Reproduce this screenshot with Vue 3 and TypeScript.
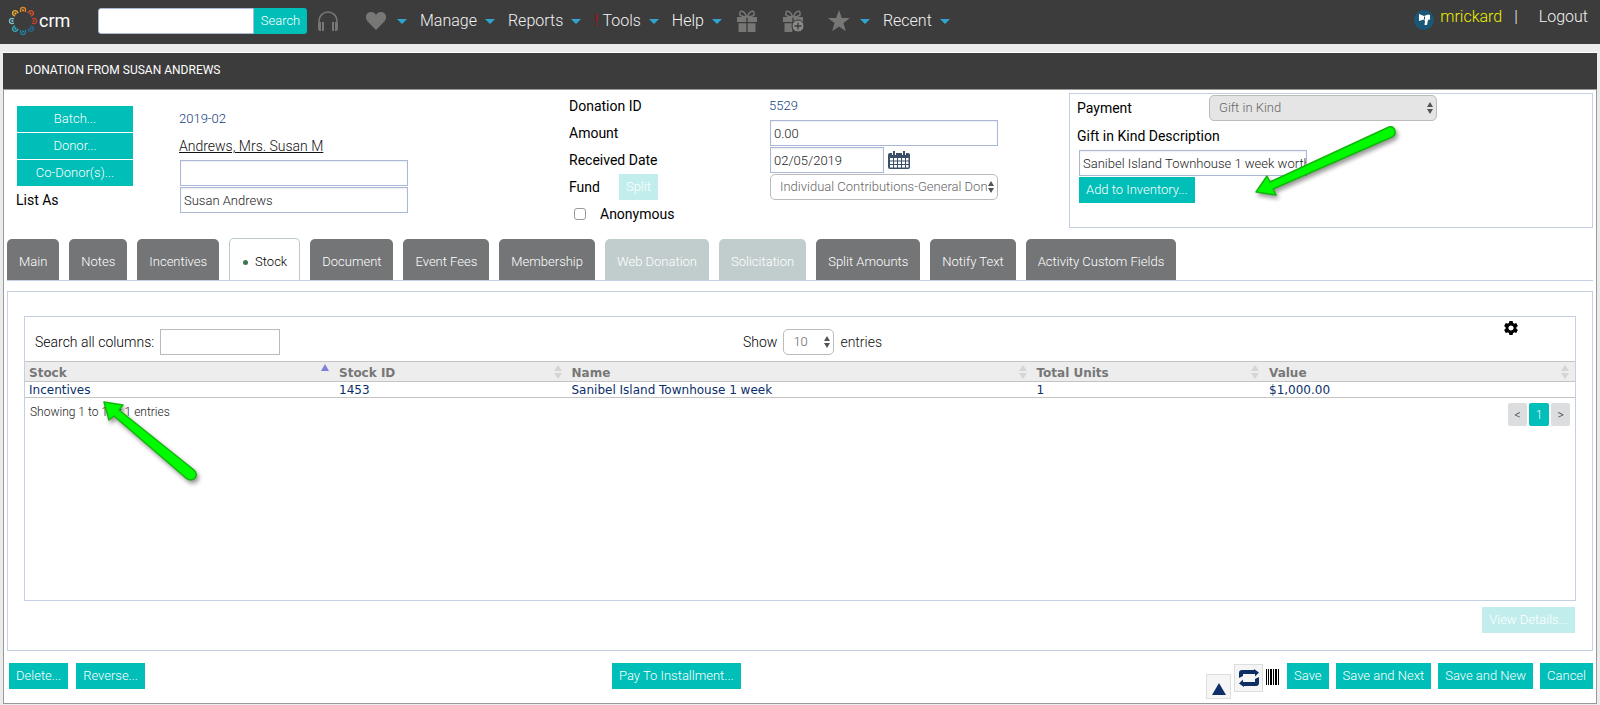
<script setup lang="ts">
import { ref } from 'vue'

interface Tab {
  label: string
  disabled?: boolean
}

const tabs: Tab[] = [
  { label: 'Main' },
  { label: 'Notes' },
  { label: 'Incentives' },
  { label: 'Stock' },
  { label: 'Document' },
  { label: 'Event Fees' },
  { label: 'Membership' },
  { label: 'Web Donation', disabled: true },
  { label: 'Solicitation', disabled: true },
  { label: 'Split Amounts' },
  { label: 'Notify Text' },
  { label: 'Activity Custom Fields' },
]
const activeTab = ref('Stock')

const columns: string[] = ['Stock', 'Stock ID', 'Name', 'Total Units', 'Value']
const rows: string[][] = [['Incentives', '1453', 'Sanibel Island Townhouse 1 week', '1', '$1,000.00']]

const petals: string[] = ['#e8892b', '#d9532c', '#c8402f', '#1f6f96', '#1c86a8', '#2fb3c6', '#7cc4cf', '#f0b32e']

const search = ref('')
const coDonor = ref('')
const listAs = ref('Susan Andrews')
const amount = ref('0.00')
const receivedDate = ref('02/05/2019')
const anonymous = ref(false)
const giftDescription = ref('Sanibel Island Townhouse 1 week worth')
const filter = ref('')
</script>

<template>
  <div class="page">
    <header class="topbar">
      <a class="logo" href="#">
        <svg width="30" height="30" viewBox="-15 -15 30 30" aria-hidden="true">
          <g v-for="(color, i) in petals" :key="i" :transform="`rotate(${i * 45})`" :stroke="color" :fill="color">
            <path d="M-2.200-9L-2.600-11Q-2.400-13.500 0-13.600Q2.400-13.500 2.600-11L2.200-9" fill="none" stroke-width="1.300" />
            <circle cx="0" cy="-10.600" r="1.100" stroke="none" />
          </g>
        </svg>
        <span>crm</span>
      </a>
      <form class="search" @submit.prevent>
        <input v-model="search" type="text" aria-label="Search" />
        <button type="submit">Search</button>
      </form>
      <nav class="menu" aria-label="Main">
        <a class="icon-link phones" href="#" aria-label="Support">
          <svg width="22" height="22" viewBox="0 0 22 22">
            <path d="M2 15v-4a9 9 0 0 1 18 0v4" fill="none" stroke="#777875" stroke-width="1.6" />
            <path d="M1 14q0-2 2-2h1v9H3q-2 0-2-3zM5 12h2v9H5zM15 12h2v9h-2zM18 12h1q2 0 2 2v4q0 3-2 3h-1z" fill="#777875" />
          </svg>
        </a>
        <a class="icon-link heart" href="#" aria-label="Favorites">
          <svg width="22" height="20" viewBox="0 0 22 20"><path d="M11 19L2.6 10.4C-.8 6.5 1.2 1 6 1c2.4 0 4 1.200 5 3 1-1.800 2.600-3 5-3 4.800 0 6.800 5.500 3.400 9.400z" fill="#777875" /></svg>
          <i class="caret"></i>
        </a>
        <a href="#">Manage<i class="caret"></i></a>
        <a href="#">Reports<i class="caret"></i></a>
        <a href="#"><b class="alert">!</b>Tools<i class="caret"></i></a>
        <a href="#">Help<i class="caret"></i></a>
        <a class="icon-link gift" href="#" aria-label="Donations">
          <svg width="22" height="22" viewBox="0 0 22 22">
            <g fill="none" stroke="#777875" stroke-width="1.5"><path d="M10.500 7C5 7 3 5 4 2.500S9 1 10.500 7zM11.500 7c5.500 0 7.500-2 6.500-4.500S13 1 11.500 7z" /></g>
            <path d="M1 7h9.300v5H1zM11.700 7H21v5h-9.300zM2.500 13.200h7.800V22H2.500zM11.700 13.200h7.800V22h-7.800z" fill="#777875" />
          </svg>
        </a>
        <a class="icon-link gift-add" href="#" aria-label="Add donation">
          <svg width="22" height="22" viewBox="0 0 22 22">
            <g fill="none" stroke="#777875" stroke-width="1.500"><path d="M10.500 7C5 7 3 5 4 2.500S9 1 10.500 7zM11.500 7c5.500 0 7.500-2 6.500-4.500S13 1 11.500 7z" /></g>
            <path d="M1 7h9.300v5H1zM11.700 7H21v5h-9.300zM2.500 13.200h7.800V22H2.500z" fill="#777875" />
            <circle cx="16" cy="16" r="6" fill="#8a8b88" stroke="#3c3c3c" />
            <path d="M16 12.500v7M12.500 16h7" stroke="#3c3c3c" stroke-width="1.300" />
          </svg>
        </a>
        <a class="icon-link star" href="#" aria-label="Starred">
          <svg width="22" height="22" viewBox="0 0 22 22"><path d="M11 0l2.800 8H22l-6.500 5 2.300 8.300L11 16.500l-6.800 4.800L6.500 13 0 8h8.200z" fill="#777875" /></svg>
          <i class="caret"></i>
        </a>
        <a href="#">Recent<i class="caret"></i></a>
      </nav>
      <div class="account">
        <svg width="20" height="20" viewBox="0 0 20 20" aria-hidden="true">
          <circle cx="10" cy="10" r="10" fill="#1b5878" />
          <path d="M5 4l5 2 4-1.500 2 .5v4.500l-2 .5-1 5h-2.500l.5-4-1-1.500L5 11z" fill="#fff" />
          <path d="M10.500 6.500v3" stroke="#1b5878" />
        </svg>
        <a class="user" href="#">mrickard</a>
        <span class="bar">|</span>
        <a href="#">Logout</a>
      </div>
    </header>

    <main class="frame">
      <h1>DONATION FROM SUSAN ANDREWS</h1>
      <div class="content">
        <section class="details">
          <div class="donor">
            <button class="btn" type="button">Batch...</button>
            <a class="blue" href="#">2019-02</a>
            <button class="btn" type="button">Donor...</button>
            <a class="donor-link" href="#">Andrews, Mrs. Susan M</a>
            <button class="btn" type="button">Co-Donor(s)...</button>
            <input v-model="coDonor" class="field" type="text" aria-label="Co-Donor(s)" />
            <label for="list-as">List As</label>
            <input id="list-as" v-model="listAs" class="field" type="text" />
          </div>

          <div class="donation">
            <span class="label">Donation ID</span>
            <span class="blue id">5529</span>
            <label for="amount">Amount</label>
            <input id="amount" v-model="amount" class="field" type="text" />
            <label for="received">Received Date</label>
            <div class="date">
              <input id="received" v-model="receivedDate" class="field" type="text" />
              <button class="plain" type="button" aria-label="Pick a date">
                <svg width="22" height="18" viewBox="0 0 22 18">
                  <rect x="0" y="2" width="22" height="16" rx="2" fill="#3a5068" />
                  <path d="M2 7h3v2.500H2zM6 7h3v2.500H6zM10 7h3v2.500h-3zM14 7h3v2.500h-3zM18 7h2.500v2.500H18zM2 10.500h3V13H2zM6 10.500h3V13H6zM10 10.500h3V13h-3zM14 10.500h3V13h-3zM18 10.500h2.500V13H18zM2 14h3v2.500H2zM6 14h3v2.500H6zM10 14h3v2.500h-3zM14 14h3v2.500h-3zM18 14h2.500v2.500H18z" fill="#fff" />
                  <path d="M6 0v4M16 0v4" stroke="#fff" stroke-width="4" />
                  <path d="M6 0v4M16 0v4" stroke="#3a5068" stroke-width="2" />
                </svg>
              </button>
            </div>
            <div class="fund">
              <label for="fund">Fund</label>
              <button class="btn" type="button" disabled>Split</button>
            </div>
            <div class="select">
              <select id="fund"><option>Individual Contributions-General Don</option></select>
              <svg width="6" height="12" viewBox="0 0 6 12"><path d="M0 5l3-5 3 5zM0 7l3 5 3-5z" fill="#555" /></svg>
            </div>
            <label class="check"><input v-model="anonymous" type="checkbox" />Anonymous</label>
          </div>

          <div class="payment">
            <div class="pay-row">
              <label for="payment">Payment</label>
              <div class="select off">
                <select id="payment" disabled><option>Gift in Kind</option></select>
                <svg width="6" height="12" viewBox="0 0 6 12"><path d="M0 5l3-5 3 5zM0 7l3 5 3-5z" fill="#555" /></svg>
              </div>
            </div>
            <label class="gift-label" for="gift">Gift in Kind Description</label>
            <input id="gift" v-model="giftDescription" class="field" type="text" />
            <button class="btn" type="button">Add to Inventory...</button>
            <svg class="pointer pointer-gift" width="150" height="80" viewBox="0 0 150 80" aria-hidden="true">
              <path d="M6 70L17 54L20 60L139 5Q144 4 145 9Q146 13 142 15L23 67L26 73Z" fill="#00fb00" stroke="#12b50c" stroke-width="1.500" stroke-linejoin="round" />
            </svg>
          </div>
        </section>

        <div class="tabs" role="tablist">
          <button
            v-for="tab in tabs"
            :key="tab.label"
            type="button"
            role="tab"
            :class="{ active: tab.label === activeTab }"
            :aria-selected="tab.label === activeTab"
            :disabled="tab.disabled"
            @click="activeTab = tab.label"
          >
            <i v-if="tab.label === activeTab" class="dot"></i>{{ tab.label }}
          </button>
        </div>

        <section class="panel">
          <div class="grid-box">
            <div class="tools">
              <div class="filter">
                <label for="filter">Search all columns:</label>
                <input id="filter" v-model="filter" type="text" />
              </div>
              <div class="length">
                <label for="length">Show</label>
                <div class="select">
                  <select id="length"><option>10</option></select>
                  <svg width="6" height="12" viewBox="0 0 6 12"><path d="M0 5l3-5 3 5zM0 7l3 5 3-5z" fill="#555" /></svg>
                </div>
                <span>entries</span>
              </div>
              <button class="plain gear" type="button" aria-label="Settings">
                <svg width="14" height="14" viewBox="-7 -7 14 14">
                  <path v-for="n in 6" :key="n" :transform="`rotate(${n * 60})`" d="M-2.200-4L-1.600-7H1.600L2.200-4z" />
                  <circle r="4" fill="none" stroke="#000" stroke-width="2.800" />
                </svg>
              </button>
            </div>
            <table>
              <thead>
                <tr>
                  <th v-for="(column, i) in columns" :key="column" scope="col" :aria-sort="i === 0 ? 'ascending' : 'none'">
                    <div class="head">
                      <span>{{ column }}</span>
                      <svg v-if="i === 0" width="8" height="16" viewBox="0 0 8 16"><path d="M0 7l4-7 4 7z" fill="#8080dc" /></svg>
                      <svg v-else width="8" height="16" viewBox="0 0 8 16"><path d="M0 7l4-6 4 6zM0 9l4 6 4-6z" fill="#d5d5d5" /></svg>
                    </div>
                  </th>
                </tr>
              </thead>
              <tbody>
                <tr v-for="row in rows" :key="row[1]">
                  <td v-for="cell in row" :key="cell">{{ cell }}</td>
                </tr>
              </tbody>
            </table>
            <div class="below">
              <span>Showing 1 to 1 of 1 entries</span>
              <div class="pager">
                <button type="button" aria-label="Previous">&lt;</button>
                <button class="current" type="button">1</button>
                <button type="button" aria-label="Next">&gt;</button>
              </div>
            </div>
            <svg class="pointer pointer-row" width="110" height="90" viewBox="0 0 110 90" aria-hidden="true">
              <path d="M5 6L24 9L20 14L95 74Q99 78 96 82Q92 86 87 82L15 20L10 24Z" fill="#00fb00" stroke="#12b50c" stroke-width="1.500" stroke-linejoin="round" />
            </svg>
          </div>
          <button class="btn view" type="button" disabled>View Details...</button>
        </section>

        <footer class="actions">
          <div class="group">
            <button class="btn" type="button">Delete...</button>
            <button class="btn" type="button">Reverse...</button>
          </div>
          <div class="group">
            <button class="btn" type="button">Pay To Installment...</button>
          </div>
          <div class="group end">
            <div class="icons">
              <button class="tile up" type="button" aria-label="Move up">
                <svg width="14" height="12" viewBox="0 0 14 12"><path d="M0 12L7 0l7 12z" fill="#0d2e68" /></svg>
              </button>
              <button class="tile" type="button" aria-label="Repeat">
                <svg width="20" height="18" viewBox="0 0 20 18">
                  <path d="M0 9V4q0-3 3-3h12V0l5 3.500-4 4V5H4v2zM20 8v6q0 3-3 3H5v1L0 14.500l4-4V13h12v-3z" fill="#0d2e62" />
                </svg>
              </button>
              <button class="plain" type="button" aria-label="Barcode">
                <svg width="14" height="16" viewBox="0 0 14 16"><path d="M0 0h1v16H0zM2 0h1v16H2zM4 0h2v16H4zM7 0h1v16H7zM9 0h2v16H9zM12 0h1v16h-1z" /></svg>
              </button>
            </div>
            <button class="btn" type="button">Save</button>
            <button class="btn" type="button">Save and Next</button>
            <button class="btn" type="button">Save and New</button>
            <button class="btn" type="button">Cancel</button>
          </div>
        </footer>
      </div>
    </main>
  </div>
</template>

<style>
body {
  background: #ebebeb;
}
</style>

<style scoped>
.page,
.page * {
  box-sizing: border-box;
}
.page {
  font: 300 14px/20px Roboto, "Liberation Sans", sans-serif;
  color: #111;
}
button,
input,
select {
  font: inherit;
  font-size: 13px;
  margin: 0;
}
svg {
  display: block;
  flex: none;
}
a {
  color: inherit;
  text-decoration: none;
}

.topbar {
  display: flex;
  align-items: center;
  height: 44px;
  padding: 0 12px 2px 8px;
  background: #3c3c3c;
  color: #f2f2f2;
  font-size: 16px;
}
.logo {
  display: flex;
  align-items: center;
  gap: 1px;
  width: 90px;
  font-size: 18px;
  font-weight: 400;
  color: #fff;
}
.search {
  display: flex;
  width: 209px;
  height: 26px;
}
.search input {
  flex: 1;
  min-width: 0;
  padding: 0 4px;
  border: 1px solid #a9bbd9;
  border-radius: 3px 0 0 3px;
  background: #fff;
}
.search button {
  width: 53px;
  padding: 0;
  border: 0;
  border-radius: 0 3px 3px 0;
  background: #00beb8;
  color: #fff;
}
.menu {
  display: flex;
  align-items: center;
  gap: 13px;
  margin-left: 10px;
}
.menu a {
  display: flex;
  align-items: center;
  white-space: nowrap;
}
.caret {
  margin-left: 8px;
  border: 5px solid transparent;
  border-top-color: #2fa5d0;
  border-bottom: 0;
}
.alert {
  margin-right: 4px;
  font-weight: 400;
  color: #a41212;
}
.phones {
  margin-right: 13px;
}
.icon-link .caret {
  margin-left: 10px;
}
.gift {
  margin-left: 1px;
}
.gift-add {
  margin: 0 11px;
}
.account {
  display: flex;
  align-items: center;
  margin-left: auto;
  padding-bottom: 8px;
}
.account svg {
  margin-top: 6px;
}
.user {
  margin: 0 12px 0 6px;
  color: #f0f000;
}
.bar {
  margin-right: 21px;
}

.frame {
  margin: 8px 3px 1px;
  border-top: 1px solid #fff;
  background: #fff;
}
h1 {
  height: 36px;
  margin: 0;
  padding: 0 22px;
  background: #3c3c3c;
  color: #fff;
  font-size: 12px;
  font-weight: 400;
  line-height: 34px;
}
.content {
  padding: 3px 3px 14px;
  border: 1px solid #999;
}

.btn {
  height: 26px;
  padding: 0 7px;
  border: 0;
  background: #00beb8;
  color: #fff;
  white-space: nowrap;
}
.btn:disabled {
  background: #c1eeec;
}
.plain {
  padding: 0;
  border: 0;
  background: none;
}
.field {
  width: 228px;
  height: 26px;
  padding: 0 0 0 3px;
  border: 1px solid #a9b8d6;
  background: #fff;
  color: #222;
  box-shadow: inset 0 1px 2px #eee;
}
label,
.label {
  font-weight: 400;
  color: #000;
}
.blue {
  font-size: 13px;
  color: #133d80;
}
.select {
  position: relative;
  width: 228px;
  height: 26px;
}
.select select {
  appearance: none;
  width: 100%;
  height: 100%;
  padding: 0 10px 0 9px;
  border: 1px solid #bbb;
  border-radius: 5px;
  background: #fff;
  color: #666;
  opacity: 1;
}
.select.off select {
  background: #e5e5e5;
}
.select svg {
  position: absolute;
  top: 7px;
  right: 4px;
  pointer-events: none;
}

.details {
  display: grid;
  grid-template-columns: 562fr 500fr 524fr;
  align-items: start;
}
.donor {
  display: grid;
  grid-template-columns: 116px 1fr;
  grid-auto-rows: 26px;
  gap: 1px 46px;
  align-items: center;
  padding: 13px 0 0 10px;
}
.donor .field {
  margin-left: 1px;
}
.donor label {
  margin-left: -1px;
}
.donor-link {
  text-decoration: underline;
}
.donation {
  display: grid;
  grid-template-columns: 201px 1fr;
  grid-auto-rows: 26px;
  gap: 1px 0;
  align-items: center;
}
.id {
  margin-left: -1px;
}
.date,
.fund {
  display: flex;
  align-items: center;
}
.date .field {
  width: 114px;
  margin-right: 4px;
}
.fund .btn {
  margin-left: 19px;
}
.check {
  display: flex;
  align-items: center;
  gap: 14px;
  padding-left: 5px;
}
.check input {
  appearance: none;
  width: 12px;
  height: 12px;
  border: 1px solid #999;
  border-radius: 3px;
}
.payment {
  position: relative;
  display: flex;
  flex-direction: column;
  align-items: flex-start;
  height: 135px;
  padding: 1px 7px;
  border: 1px solid #c3cfe2;
}
.pay-row {
  display: flex;
  align-items: center;
}
.pay-row label {
  width: 132px;
}
.gift-label {
  margin: 5px 0 4px;
}
.payment .field {
  margin: 0 0 1px 2px;
}
.payment > .btn {
  margin-left: 2px;
}

.pointer {
  position: absolute;
  overflow: visible;
  pointer-events: none;
  filter: drop-shadow(2px 3px 2px rgba(0, 0, 0, 0.4));
}
.pointer-gift {
  left: 180px;
  top: 28px;
}
.pointer-row {
  left: 74px;
  top: 79px;
}

.tabs {
  display: flex;
  align-items: flex-end;
  gap: 10px;
  margin-top: 10px;
  border-bottom: 1px solid #c3cfe2;
}
.tabs button {
  display: flex;
  align-items: center;
  height: 41px;
  padding: 4px 12px 0;
  border: 0;
  border-radius: 5px 5px 0 0;
  background: #747577;
  color: #fff;
  white-space: nowrap;
}
.tabs button:disabled {
  background: #c1cdcd;
}
.tabs button.active {
  height: 42px;
  border: 1px solid #b9cccb;
  border-bottom: 0;
  background: #fff;
  color: #000;
}
.dot {
  width: 5px;
  height: 5px;
  margin: 2px 7px 0 1px;
  border-radius: 50%;
  background: #3f7550;
}

.panel {
  margin-top: 10px;
  padding: 24px 16px 17px;
  border: 1px solid #c3cfe2;
}
.grid-box {
  position: relative;
  height: 285px;
  border: 1px solid #c3cfe2;
}
.tools {
  display: grid;
  grid-template-columns: 718px 1fr auto;
  height: 44px;
}
.filter,
.length {
  display: flex;
  align-items: center;
  gap: 6px;
  padding-top: 6px;
}
.filter {
  padding-left: 10px;
}
.filter label,
.length label {
  font-weight: 300;
}
.filter input {
  width: 120px;
  height: 26px;
  padding: 0 4px;
  border: 1px solid #bbb;
  background: #fff;
}
.length .select {
  width: 51px;
}
.gear {
  align-self: start;
  margin: 4px 57px 0 0;
}
table {
  width: 100%;
  border-collapse: collapse;
  table-layout: fixed;
  font: 12px/14px Verdana, "DejaVu Sans", sans-serif;
  color: #0a2f6b;
}
th:nth-child(1),
th:nth-child(5) {
  width: 20%;
}
th:nth-child(2),
th:nth-child(4) {
  width: 15%;
}
th:nth-child(3) {
  width: 30%;
}
th {
  height: 20px;
  padding: 0 6px 0 4px;
  border: 1px solid #c4c4c4;
  border-width: 1px 0;
  background: #ededed;
  color: #777;
  text-align: left;
}
.head {
  display: flex;
  align-items: center;
  justify-content: space-between;
}
.head span {
  padding-top: 2px;
}
td {
  padding: 1px 4px 0;
  border-bottom: 1px solid #c4c4c4;
}
.below {
  display: flex;
  justify-content: space-between;
  padding: 5px 5px 0;
  font-size: 12px;
  line-height: 18px;
  color: #222;
}
.pager {
  display: flex;
  gap: 2px;
}
.pager button {
  width: 19px;
  height: 23px;
  padding: 0;
  border: 0;
  border-radius: 2px;
  background: #dcdddf;
  color: #444;
  font-size: 12px;
}
.pager button.current {
  width: 20px;
  background: #00beb8;
  color: #fff;
}
.view {
  display: block;
  margin: 6px 1px 0 auto;
}

.actions {
  display: grid;
  grid-template-columns: minmax(0, 603fr) minmax(0, 490fr) minmax(0, 491fr);
  align-items: start;
  padding: 12px 0 0 2px;
}
.group {
  display: flex;
  gap: 8px;
}
.group.end {
  justify-content: flex-end;
  gap: 7px;
}
.icons {
  display: flex;
  align-items: flex-start;
  height: 26px;
  gap: 3px;
}
.icons .plain {
  margin-top: 6px;
}
.tile {
  display: flex;
  align-items: center;
  justify-content: center;
  width: 29px;
  height: 28px;
  padding: 0;
  margin-top: 1px;
  border: 1px solid #ddd;
  background: #f5f5f5;
}
.tile.up {
  width: 25px;
  height: 25px;
  margin-top: 11px;
  padding-top: 4px;
}
</style>
